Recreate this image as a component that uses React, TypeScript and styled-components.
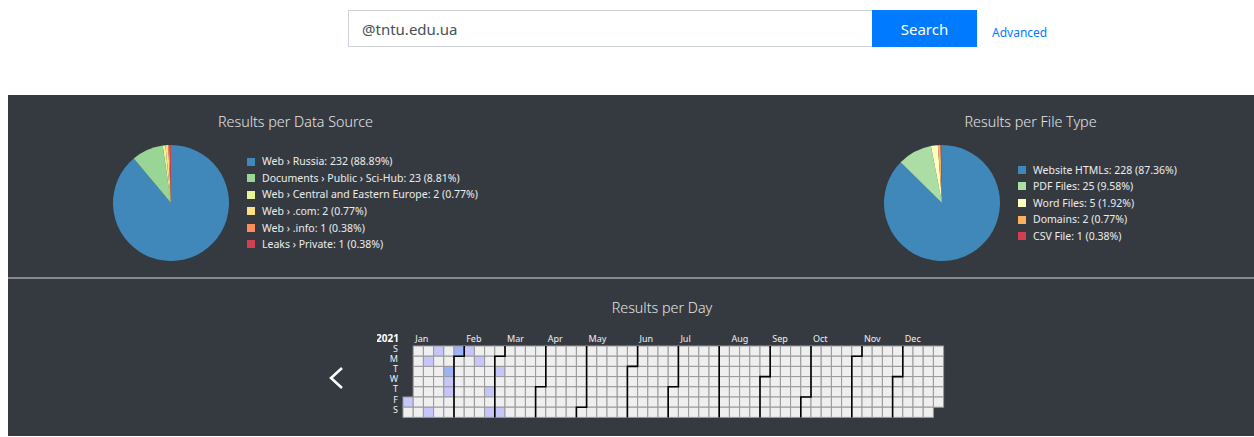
import React from "react";
import styled, { createGlobalStyle } from "styled-components";

const GlobalStyle = createGlobalStyle`
    html, body {
        overflow: hidden;
    }
    body {
        margin: 8px 0 0 8px;
        background: #ffffff;
        font-family: "Noto Sans", "Open Sans", sans-serif;
    }
`;

const SearchRow = styled.div`
    display: flex;
    align-items: center;
    margin: 2px 0 0 340px;
    height: 37px;
`;

const SearchInput = styled.input`
    box-sizing: border-box;
    width: 524px;
    height: 37px;
    padding: 0 13px;
    border: 1px solid #ced4da;
    border-right: none;
    font-family: inherit;
    font-size: 15px;
    color: #495057;
    outline: none;
`;

const SearchButton = styled.button`
    width: 105px;
    height: 37px;
    border: none;
    background: #007bff;
    color: #ffffff;
    font-family: inherit;
    font-size: 15px;
    padding: 0;
`;

const AdvancedLink = styled.a`
    margin: 7px 0 0 15px;
    color: #007bff;
    font-size: 12px;
    text-decoration: none;
`;

const Panel = styled.div`
    width: 1308px;
    margin-top: 48px;
    background: #353a41;
    color: #e6e6e6;
`;

const ChartsRow = styled.div`
    display: grid;
    grid-template-columns: 771px auto;
    align-items: start;
    padding: 16px 0 16px 105px;
`;

const ChartBlock = styled.div`
    display: flex;
    flex-direction: column;
    align-items: center;
    justify-self: start;
`;

const ChartTitle = styled.h4`
    margin: 0;
    font-size: 14.3px;
    line-height: 22px;
    font-weight: 300;
    color: #e4e4e4;
`;

const ChartBody = styled.div`
    display: flex;
    align-items: center;
    gap: 18px;
    margin-top: 12px;
`;

const Legend = styled.ul`
    list-style: none;
    margin: 0;
    padding: 0;
`;

const LegendItem = styled.li`
    display: flex;
    align-items: center;
    gap: 7px;
    font-size: 10.5px;
    line-height: 16.6px;
    color: #ececec;
    white-space: nowrap;
`;

const Swatch = styled.span<{ $color: string }>`
    width: 8px;
    height: 8px;
    background: ${(p) => p.$color};
`;

const Divider = styled.hr`
    margin: 0;
    border: none;
    height: 2px;
    background: #878b91;
`;

const DaySection = styled.div`
    display: flex;
    flex-direction: column;
    align-items: center;
    padding-top: 18px;
    height: 157px;
    box-sizing: border-box;
`;

const CalendarRow = styled.div`
    display: flex;
    align-items: center;
    gap: 28px;
    margin-top: 11px;
`;

const NavButton = styled.button<{ $hidden?: boolean }>`
    width: 20px;
    height: 24px;
    margin-top: 6px;
    padding: 0;
    border: none;
    background: none;
    display: flex;
    align-items: center;
    justify-content: flex-start;
    visibility: ${(p) => (p.$hidden ? "hidden" : "visible")};
`;

const YearLabel = styled.text`
    font-size: 10px;
    font-weight: 700;
    fill: #ffffff;
`;

const AxisLabel = styled.text`
    font-size: 9px;
    fill: #f0f0f0;
`;

const MonthLabel = styled.text`
    font-size: 9px;
    fill: #f0f0f0;
`;

type Slice = { label: string; value: number; color: string };

const sources: Slice[] = [
    { label: "Web › Russia", value: 232, color: "#3f88b9" },
    { label: "Documents › Public › Sci-Hub", value: 23, color: "#99d594" },
    { label: "Web › Central and Eastern Europe", value: 2, color: "#e6f598" },
    { label: "Web › .com", value: 2, color: "#fee08b" },
    { label: "Web › .info", value: 1, color: "#fc8d59" },
    { label: "Leaks › Private", value: 1, color: "#d53e4f" },
];

const fileTypes: Slice[] = [
    { label: "Website HTMLs", value: 228, color: "#3f88b9" },
    { label: "PDF Files", value: 25, color: "#abdda4" },
    { label: "Word Files", value: 5, color: "#ffffbf" },
    { label: "Domains", value: 2, color: "#fdae61" },
    { label: "CSV File", value: 1, color: "#d53e4f" },
];

const PIE_R = 58;

const arcPath = (a0: number, a1: number) => {
    const p = (a: number) =>
        `${(PIE_R + PIE_R * Math.sin(a)).toFixed(2)},${(PIE_R - PIE_R * Math.cos(a)).toFixed(2)}`;
    const large = a1 - a0 > Math.PI ? 1 : 0;
    return `M${PIE_R},${PIE_R}L${p(a0)}A${PIE_R},${PIE_R} 0 ${large} 1 ${p(a1)}Z`;
};

const PieChart = ({ data }: { data: Slice[] }) => {
    const total = data.reduce((s, d) => s + d.value, 0);
    let acc = 0;
    return (
        <svg width={PIE_R * 2} height={PIE_R * 2}>
            {data.map((d) => {
                const a0 = (acc / total) * Math.PI * 2;
                acc += d.value;
                const a1 = (acc / total) * Math.PI * 2;
                return <path key={d.label} d={arcPath(a0, a1)} fill={d.color} />;
            })}
        </svg>
    );
};

const ResultsChart = ({ title, data }: { title: string; data: Slice[] }) => {
    const total = data.reduce((s, d) => s + d.value, 0);
    return (
        <ChartBlock>
            <ChartTitle>{title}</ChartTitle>
            <ChartBody>
                <PieChart data={data} />
                <Legend>
                    {data.map((d) => (
                        <LegendItem key={d.label}>
                            <Swatch $color={d.color} />
                            {d.label}: {d.value} ({((d.value / total) * 100).toFixed(2)}%)
                        </LegendItem>
                    ))}
                </Legend>
            </ChartBody>
        </ChartBlock>
    );
};

// calendar for 2021: Jan 1 is a Friday, weeks start on Sunday
const CELL = 10.2;
const GX = 26;
const GY = 16;
const FIRST_DOW = 5;
const DAYS = 365;
const MONTH_STARTS = [0, 31, 59, 90, 120, 151, 181, 212, 243, 273, 304, 334];
const MONTHS = ["Jan", "Feb", "Mar", "Apr", "May", "Jun", "Jul", "Aug", "Sep", "Oct", "Nov", "Dec"];
const WEEKDAYS = ["S", "M", "T", "W", "T", "F", "S"];

// day-of-year -> activity level (1 light, 2 strong)
const activity: Record<number, number> = {
    0: 1, 10: 1, 15: 1, 16: 1, 25: 2, 26: 1, 27: 1, 30: 2, 37: 1, 45: 1, 55: 1, 57: 1, 60: 1, 64: 1,
};

const levelFill = (lv?: number) => (lv === 2 ? "#9ab4f6" : lv === 1 ? "#c6c6fc" : "#efefef");

const pos = (day: number) => ({ col: Math.floor((day + FIRST_DOW) / 7), row: (day + FIRST_DOW) % 7 });

const monthEdge = (day: number) => {
    const { col, row } = pos(day);
    const x = col * CELL;
    if (row === 0) return `M${x},0V${7 * CELL}`;
    return `M${x},${7 * CELL}V${row * CELL}H${x + CELL}V0`;
};

const YearCalendar = () => (
    <svg width={570} height={90}>
        <YearLabel x={GX - 4} y={12} textAnchor="end">2021</YearLabel>
        {WEEKDAYS.map((d, i) => (
            <AxisLabel key={i} x={GX - 5} y={GY + i * CELL + 5.5} textAnchor="end">{d}</AxisLabel>
        ))}
        {MONTHS.map((m, i) => (
            <MonthLabel key={m} x={GX + (pos(MONTH_STARTS[i]).col + 1) * CELL + 2} y={12}>{m}</MonthLabel>
        ))}
        <g transform={`translate(${GX},${GY})`}>
            {Array.from({ length: DAYS }, (_, day) => {
                const { col, row } = pos(day);
                return (
                    <rect
                        key={day}
                        x={col * CELL}
                        y={row * CELL}
                        width={CELL}
                        height={CELL}
                        fill={levelFill(activity[day])}
                        stroke="#9a9a9a"
                        strokeWidth={1}
                    />
                );
            })}
            {MONTH_STARTS.slice(1).map((d) => (
                <path key={d} d={monthEdge(d)} fill="none" stroke="#000000" strokeWidth={1.6} />
            ))}
        </g>
    </svg>
);

const Chevron = () => (
    <svg width={16} height={24} viewBox="0 0 16 24">
        <polyline points="13,2 2,12 13,22" fill="none" stroke="#ffffff" strokeWidth={2.6} />
    </svg>
);

export default function App() {
    return (
        <>
            <GlobalStyle />
            <SearchRow>
                <SearchInput defaultValue="@tntu.edu.ua" />
                <SearchButton>Search</SearchButton>
                <AdvancedLink href="#">Advanced</AdvancedLink>
            </SearchRow>
            <Panel>
                <ChartsRow>
                    <ResultsChart title="Results per Data Source" data={sources} />
                    <ResultsChart title="Results per File Type" data={fileTypes} />
                </ChartsRow>
                <Divider />
                <DaySection>
                    <ChartTitle>Results per Day</ChartTitle>
                    <CalendarRow>
                        <NavButton><Chevron /></NavButton>
                        <YearCalendar />
                        <NavButton $hidden><Chevron /></NavButton>
                    </CalendarRow>
                </DaySection>
            </Panel>
        </>
    );
}
